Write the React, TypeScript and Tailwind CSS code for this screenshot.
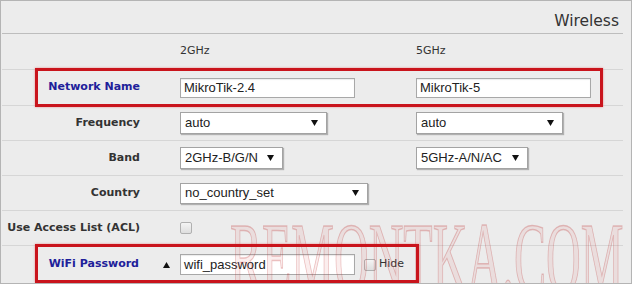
import React from "react";

const LABEL = "font-['DejaVu_Sans',Verdana,sans-serif]";
const FIELD = "font-['Liberation_Sans',Arial,sans-serif] text-[13px] text-[#222]";

function Arrow({ up = false }: { up?: boolean }) {
  return (
    <svg width="7" height="6" viewBox="0 0 7 6" className="shrink-0">
      <polygon points={up ? "0,6 7,6 3.5,0" : "0,0 7,0 3.5,6"} fill="#111" />
    </svg>
  );
}

function TextBox({ value, w, h = "h-[20px]" }: { value: string; w: string; h?: string }) {
  return (
    <div
      className={`${w} ${h} ${FIELD} flex items-center bg-white border border-[#a8a8a8] pl-[3px] shadow-[inset_0_1px_1px_rgba(0,0,0,0.08)]`}
    >
      {value}
    </div>
  );
}

function Select({ value, w, h = "h-[22px]" }: { value: string; w: string; h?: string }) {
  return (
    <div
      className={`${w} ${h} ${FIELD} flex items-center justify-between bg-white border border-[#a3a3a3] pl-[4px] pr-[8px] shadow-[1px_1px_1px_rgba(0,0,0,0.25)]`}
    >
      <span>{value}</span>
      <Arrow />
    </div>
  );
}

function Check() {
  return (
    <div className="w-[12px] h-[12px] rounded-[2px] border border-[#b0b0b0] bg-gradient-to-b from-[#f4f4f4] to-[#dedede]" />
  );
}

function Row({
  label,
  blue = false,
  h,
  children,
}: {
  label?: string;
  blue?: boolean;
  h: string;
  children: React.ReactNode;
}) {
  return (
    <div className={`flex ${h} border-b border-[#d6d6d6]`}>
      <div
        className={`w-[178px] shrink-0 flex items-center justify-end pr-[40px] ${LABEL} text-[11px] font-bold ${
          blue ? "text-[#20209a]" : "text-[#333]"
        }`}
      >
        {label}
      </div>
      {children}
    </div>
  );
}

export default function App() {
  return (
    <div className="relative w-[632px] h-[284px] overflow-hidden bg-[#ececec] border border-[#b4b4b4]">
      <div className="pl-[1px] pr-[8px]">
        <div
          className={`h-[33px] flex justify-end items-start pt-[11px] pr-[4px] border-b border-[#bdbdbd] ${LABEL} text-[15.5px] leading-[18px] text-[#333]`}
        >
          Wireless
        </div>

        <div className={`flex h-[36px] border-b border-[#d6d6d6] ${LABEL} text-[11px] text-[#333]`}>
          <div className="w-[178px] shrink-0" />
          <div className="w-[236px] shrink-0 flex items-center">2GHz</div>
          <div className="flex items-center">5GHz</div>
        </div>

        <Row label="Network Name" blue h="h-[36px]">
          <div className="w-[236px] shrink-0 flex items-center">
            <TextBox value="MikroTik-2.4" w="w-[175px]" />
          </div>
          <div className="flex items-center">
            <TextBox value="MikroTik-5" w="w-[175px]" />
          </div>
        </Row>

        <Row label="Frequency" h="h-[35px]">
          <div className="w-[236px] shrink-0 flex items-center">
            <Select value="auto" w="w-[147px]" />
          </div>
          <div className="flex items-center">
            <Select value="auto" w="w-[147px]" />
          </div>
        </Row>

        <Row label="Band" h="h-[35px]">
          <div className="w-[236px] shrink-0 flex items-center">
            <Select value="2GHz-B/G/N" w="w-[103px]" />
          </div>
          <div className="flex items-center">
            <Select value="5GHz-A/N/AC" w="w-[112px]" />
          </div>
        </Row>

        <Row label="Country" h="h-[35px]">
          <div className="flex items-center">
            <Select value="no_country_set" w="w-[188px]" h="h-[21px]" />
          </div>
        </Row>

        <Row label="Use Access List (ACL)" h="h-[35px]">
          <div className="flex items-center">
            <Check />
          </div>
        </Row>

        <div className="flex h-[37px]">
          <div
            className={`w-[178px] shrink-0 flex items-center justify-end pr-[9px] ${LABEL} text-[11px] font-bold text-[#20209a]`}
          >
            <span>WiFi Password</span>
            <span className="ml-[24px] mr-[1px] flex items-center">
              <Arrow up />
            </span>
          </div>
          <div className="flex items-center">
            <TextBox value="wifi_password" w="w-[175px]" h="h-[21px]" />
            <div className="ml-[9px]">
              <Check />
            </div>
            <span className={`ml-[3px] ${LABEL} text-[11px] text-[#333]`}>Hide</span>
          </div>
        </div>
      </div>

      {/* watermark */}
      <div className="pointer-events-none absolute left-[229px] top-[207px] origin-left scale-x-[0.48] whitespace-nowrap font-['Liberation_Serif','Times_New_Roman',serif] text-[100px] leading-[100px] text-[rgba(215,90,90,0.1)] [-webkit-text-stroke:1.5px_rgba(190,50,50,0.28)]">
        REMONTKA.COM
      </div>

      {/* annotation boxes */}
      <div className="pointer-events-none absolute left-[34px] top-[67px] w-[568px] h-[39px] border-[3px] border-[#c9141c] shadow-[0_0_2px_rgba(230,80,80,0.6)]" />
      <div className="pointer-events-none absolute left-[34px] top-[243px] w-[384px] h-[39px] border-[3px] border-[#c9141c] shadow-[0_0_2px_rgba(230,80,80,0.6)]" />
    </div>
  );
}
